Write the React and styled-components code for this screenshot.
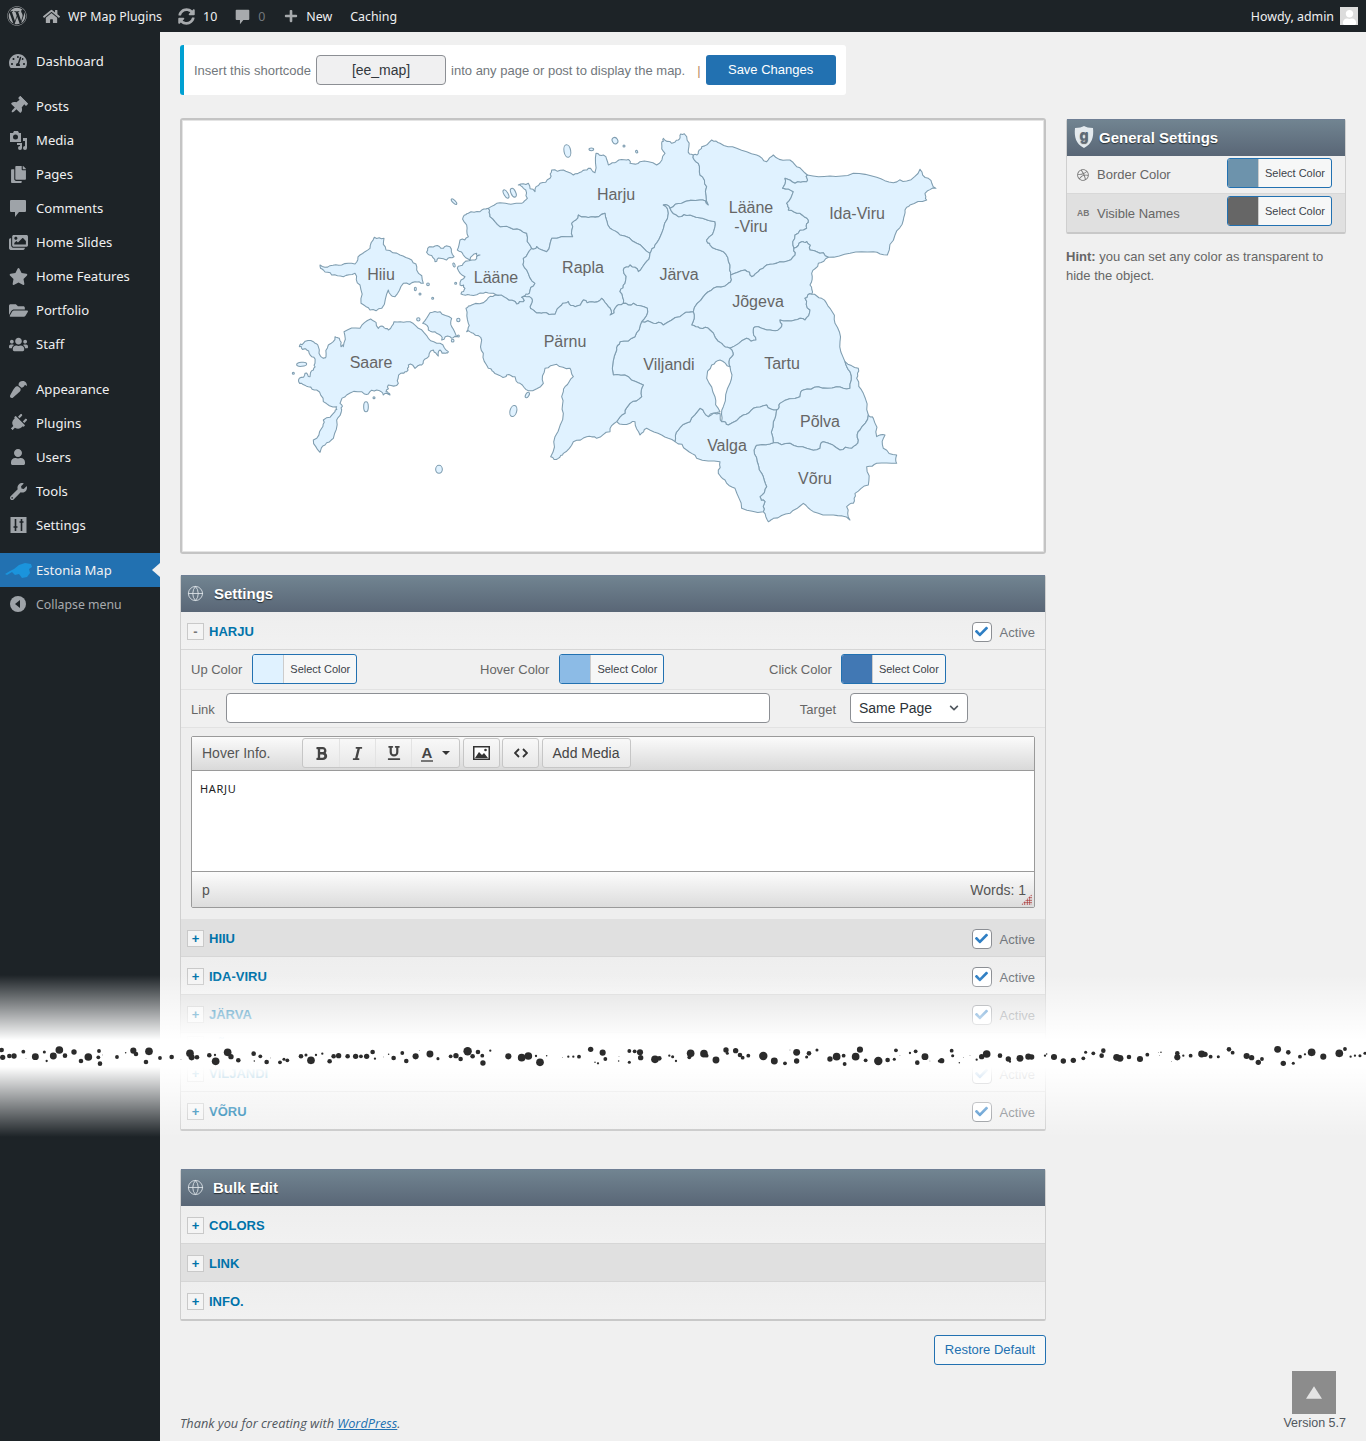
import React from "react";
import styled, { createGlobalStyle } from "styled-components";
import {
  FaWordpress, FaHome, FaSyncAlt, FaPlus, FaTachometerAlt, FaThumbtack, FaCopy,
  FaImages, FaStar, FaFolderOpen, FaUsers, FaPaintBrush, FaPlug, FaUser, FaWrench,
  FaBold, FaItalic, FaUnderline, FaCheck, FaChevronDown, FaDribbble,
} from "react-icons/fa";
import { Globe } from "lucide-react";

const GlobalStyle = createGlobalStyle`
  html, body { margin: 0; padding: 0; background: #f0f0f0; }
  body { font-family: "Liberation Sans", Arial, sans-serif; font-size: 13px; color: #666; }
  * { box-sizing: border-box; }
`;

const Page = styled.div`
  position: relative;
  width: 1366px;
  min-height: 1441px;
  display: flex;
  flex-direction: column;
  overflow: hidden;
`;

/* ---- admin bar ---- */
const TopBar = styled.header`
  height: 32px;
  display: flex;
  align-items: center;
  padding: 0 8px 0 7px;
  background: #1d2327;
  color: #f0f0f1;
  font-family: "Noto Sans", sans-serif;
  font-size: 12.4px;
  flex-shrink: 0;
`;
const BarItem = styled.span`
  display: flex;
  align-items: center;
  gap: ${(p) => p.$gap || 8}px;
  margin-left: ${(p) => p.$left || 0}px;
  color: ${(p) => (p.$dim ? "#72777c" : "#f0f0f1")};
  svg { color: #a7aaad; flex-shrink: 0; }
`;
const BarRight = styled.span`
  margin-left: auto;
  display: flex;
  align-items: center;
  gap: 6px;
`;
const Avatar = styled.span`
  width: 18px;
  height: 18px;
  background: #dcdcdc;
  display: flex;
  align-items: flex-end;
  justify-content: center;
  color: #fff;
  overflow: hidden;
`;

/* ---- admin menu ---- */
const Body = styled.div`
  flex: 1;
  display: flex;
`;
const Sidebar = styled.nav`
  width: 160px;
  flex-shrink: 0;
  background: #1d2327;
  padding-top: 12px;
  font-family: "Noto Sans", sans-serif;
  font-size: 13.1px;
`;
const MenuGroup = styled.div`
  margin-bottom: 11px;
`;
const MenuItem = styled.div`
  position: relative;
  height: 34px;
  display: flex;
  align-items: center;
  color: ${(p) => (p.$muted ? "#a7aaad" : "#f0f0f1")};
  font-size: ${(p) => (p.$muted ? "12.3px" : "inherit")};
  background: ${(p) => (p.$active ? "#2271b1" : "transparent")};
  &::after {
    content: ${(p) => (p.$active ? '""' : "none")};
    position: absolute;
    right: 0;
    top: 10px;
    border: 7px solid transparent;
    border-right: 8px solid #f0f0f0;
    border-left: 0;
  }
`;
const MenuIcon = styled.span`
  width: 36px;
  display: flex;
  justify-content: center;
  color: #9ea3a8;
  svg { transform: ${(p) => (p.$rotate ? `rotate(${p.$rotate}deg)` : "none")}; }
`;

/* ---- main ---- */
const Content = styled.main`
  flex: 1;
  display: flex;
  flex-direction: column;
  padding: 13px 20px 9px;
  min-width: 0;
`;
const Notice = styled.div`
  width: 666px;
  height: 50px;
  display: flex;
  align-items: center;
  padding-left: 10px;
  background: #fff;
  border-left: 4px solid #00a0d2;
  border-radius: 3px;
  margin-bottom: 23px;
  color: #72777c;
  gap: 5px;
`;
const ShortcodeBox = styled.div`
  width: 130px;
  height: 30px;
  display: flex;
  align-items: center;
  justify-content: center;
  background: #f0f0f1;
  border: 1px solid #8c8f94;
  border-radius: 4px;
  color: #32373c;
  font-size: 14px;
`;
const Pipe = styled.span`
  margin: 0 0 0 7px;
  color: #b98c62;
`;
const PrimaryButton = styled.button`
  width: 130px;
  height: 30px;
  padding: 0 0 2px;
  background: #2271b1;
  color: #fff;
  border: 0;
  border-radius: 3px;
  font-family: inherit;
  font-size: 13px;
`;
const Columns = styled.div`
  display: grid;
  grid-template-columns: 866px 280px;
  gap: 20px;
  align-items: start;
`;
const Column = styled.div`
  display: flex;
  flex-direction: column;
  padding-top: ${(p) => p.$top || 0}px;
`;
const MapBox = styled.div`
  height: 436px;
  padding: 0 0 0 98px;
  background: #fff;
  border: 2px solid #c4c4c4;
  border-radius: 3px;
  margin-bottom: 21px;
  box-shadow: inset 0 0 0 1px #e4e4e4;
`;
const MapSvg = styled.svg`
  display: block;
  width: 680px;
  height: 420px;
  overflow: visible;
`;
const Region = styled.polygon`
  fill: #e0f2ff;
  stroke: #7f9db0;
  stroke-width: 3.2;
  stroke-linejoin: round;
`;
const Islet = styled.ellipse`
  fill: #e0f2ff;
  stroke: #7f9db0;
  stroke-width: 3.2;
`;
const MapLabel = styled.text`
  font-family: "Liberation Sans", Arial, sans-serif;
  font-size: 48px;
  fill: #666;
  text-anchor: middle;
  dominant-baseline: central;
`;

/* ---- panels ---- */
const Panel = styled.section`
  border: 1px solid #cfcfcf;
  border-top: 0;
  border-bottom: 2px solid #c8c8c8;
  border-radius: 2px;
  margin-bottom: ${(p) => p.$bottom || 0}px;
`;
const PanelHead = styled.div`
  height: 37px;
  display: flex;
  align-items: center;
  gap: ${(p) => p.$gap || 10}px;
  padding: 0 0 2px ${(p) => p.$left || 6}px;
  background: linear-gradient(#718491, #596676);
  border-top: 1px solid #6f7f95;
  color: #fff;
  font-size: 15px;
  font-weight: bold;
  text-shadow: 0 1px 1px rgba(0, 0, 0, 0.6);
  svg { flex-shrink: 0; }
`;
const Row = styled.div`
  height: ${(p) => p.$height || 38}px;
  display: flex;
  align-items: center;
  padding: 2px 10px 0 6px;
  background: ${(p) => (p.$alt ? "#e0e0e0" : "linear-gradient(#eeeeee, #f1f1f1)")};
  border-bottom: 1px solid #d6d6d6;
  overflow: hidden;
  flex-shrink: 0;
  &:last-child { border-bottom: 0; }
`;
const Toggle = styled.span`
  width: 17px;
  height: 17px;
  display: flex;
  align-items: center;
  justify-content: center;
  border: 1px solid #c9c9c9;
  background: #f4f4f4;
  color: ${(p) => (p.$open ? "#777" : "#0073aa")};
  font-size: 13px;
  font-weight: bold;
  margin-right: 5px;
  flex-shrink: 0;
`;
const RowTitle = styled.span`
  color: #0073aa;
  font-size: 13px;
  font-weight: bold;
`;
const ActiveWrap = styled.label`
  margin-left: auto;
  display: flex;
  align-items: center;
  gap: 8px;
  color: #72777c;
`;
const ActiveText = styled.span`
  padding-top: 2px;
`;
const CheckBox = styled.span`
  width: 20px;
  height: 20px;
  display: flex;
  align-items: center;
  justify-content: center;
  background: #fff;
  border: 1px solid #8c8f94;
  border-radius: 4px;
  color: #2f7fc4;
`;
const ColorGrid = styled.div`
  height: 40px;
  display: grid;
  grid-template-columns: 289px 289px 1fr;
  align-items: start;
  padding-left: 10px;
  border-bottom: 1px solid #e2e2e2;
`;
const ColorCell = styled.div`
  display: flex;
  align-items: center;
  gap: ${(p) => p.$gap || 10}px;
  height: 30px;
  margin-top: 4px;
`;
const ColorButton = styled.div`
  width: 105px;
  height: 30px;
  display: flex;
  border: 1px solid #2271b1;
  border-radius: 3px;
  background: #f6f7f7;
  overflow: hidden;
  color: #3c434a;
  font-size: 11px;
  flex-shrink: 0;
`;
const Swatch = styled.span`
  width: 31px;
  background: ${(p) => p.$color};
  border-right: 1px solid #ccc;
`;
const SwatchText = styled.span`
  flex: 1;
  display: flex;
  align-items: center;
  justify-content: center;
`;
const LinkRow = styled.div`
  height: 38px;
  display: flex;
  align-items: center;
  padding: 0 0 2px 10px;
  border-bottom: 1px solid #e2e2e2;
`;
const FieldLabel = styled.span`
  padding-top: 3px;
`;
const TextInput = styled.div`
  width: 544px;
  height: 30px;
  margin-left: 11px;
  background: #fff;
  border: 1px solid #8c8f94;
  border-radius: 4px;
`;
const TargetLabel = styled(FieldLabel)`
  margin: 0 14px 0 30px;
`;
const SelectBox = styled.div`
  width: 118px;
  height: 30px;
  display: flex;
  align-items: center;
  justify-content: space-between;
  padding: 0 8px 0 8px;
  background: #fff;
  border: 1px solid #8c8f94;
  border-radius: 4px;
  color: #2c3338;
  font-size: 14px;
  svg { color: #50575e; }
`;
const EditorWrap = styled.div`
  padding: 8px 10px 11px;
  background: #eee;
`;
const Editor = styled.div`
  border: 1px solid #9a9a9a;
  border-radius: 2px;
  background: #fff;
`;
const EditorBar = styled.div`
  height: 34px;
  display: flex;
  align-items: flex-start;
  background: linear-gradient(#fbfbfb, #d9d9d9);
  border-bottom: 1px solid #9a9a9a;
  padding: 1px 0 0 10px;
  font-size: 14px;
  color: #555;
`;
const EditorLabel = styled.span`
  width: 100px;
  line-height: 30px;
`;
const ToolGroup = styled.div`
  height: 30px;
  display: flex;
  margin-right: 2.5px;
  border: 1px solid #c6c6c6;
  border-radius: 3px;
  background: linear-gradient(#f8f8f8, #e8e8e8);
  color: #333;
`;
const ToolButton = styled.span`
  width: ${(p) => p.$width || 36}px;
  display: flex;
  align-items: center;
  justify-content: center;
  gap: ${(p) => p.$gap || 0}px;
  font-size: 14px;
  color: #444;
  & + & { border-left: 1px solid #e3e3e3; }
`;
const ColorA = styled.span`
  font-weight: bold;
  font-size: 15px;
  line-height: 15px;
  border-bottom: 2px solid #777;
  padding: 0 1px;
`;
const Caret = styled.span`
  border: 4px solid transparent;
  border-top: 4px solid #333;
  border-bottom: 0;
`;
const EditorBody = styled.div`
  height: 100px;
  padding: 10px 8px;
  font-family: "Noto Sans", sans-serif;
  font-size: 11px;
  letter-spacing: 0.7px;
  color: #222;
`;
const EditorFoot = styled.div`
  position: relative;
  height: 36px;
  display: flex;
  align-items: center;
  justify-content: space-between;
  padding: 1px 8px 1px 10px;
  background: linear-gradient(#fcfcfc, #dcdcdc);
  border-top: 1px solid #9a9a9a;
  font-size: 14px;
  color: #555;
`;
const Grip = styled.span`
  position: absolute;
  right: 2px;
  bottom: 2px;
  width: 11px;
  height: 11px;
  background: radial-gradient(circle, #a33 0.8px, transparent 1px) 0 0 / 2.5px 2.5px;
  clip-path: polygon(100% 0, 100% 100%, 0 100%);
`;
const SideRow = styled.div`
  height: 38px;
  display: flex;
  align-items: center;
  padding-left: 10px;
  background: ${(p) => (p.$alt ? "#e0e0e0" : "#f0f0f0")};
  border-bottom: 1px solid #d8d8d8;
  &:last-child { border-bottom: 0; }
  font-size: 13px;
`;
const SideIcon = styled.span`
  width: 20px;
  display: flex;
  color: #777;
  font-size: 8.5px;
  font-weight: bold;
`;
const SideName = styled.span`
  flex: 1;
`;
const SideSwatch = styled(ColorButton)`
  margin-right: 13px;
  margin-bottom: 4px;
`;
const Hint = styled.p`
  margin: 13px 0 0;
  line-height: 19px;
  color: #666;
  font-size: 13px;
`;
const HintLead = styled.b`
  margin-right: 3.6px;
`;
const Actions = styled.div`
  display: flex;
  justify-content: flex-end;
  margin-top: 14px;
`;
const OutlineButton = styled.button`
  width: 112px;
  height: 30px;
  padding: 0 0 2px;
  background: #f6f7f7;
  border: 1px solid #2271b1;
  border-radius: 3px;
  color: #2271b1;
  font-family: inherit;
  font-size: 13px;
`;
const Footer = styled.footer`
  margin-top: auto;
  display: flex;
  justify-content: space-between;
  font-size: 12.5px;
  color: #50575e;
  i { font-family: "Open Sans", sans-serif; font-size: 12.75px; }
  a { color: #2271b1; }
  span { padding-top: 2px; }
`;
const ScrollTop = styled.div`
  position: absolute;
  top: 1371px;
  right: 30px;
  width: 44px;
  height: 43px;
  background: #8c8c8c;
  display: flex;
  align-items: center;
  justify-content: center;
`;
const Torn = styled.div`
  position: absolute;
  top: 975px;
  left: 0;
  right: 0;
  height: 162px;
  background: linear-gradient(
    rgba(255, 255, 255, 0) 0,
    #fff 65px,
    #fff 92px,
    rgba(255, 255, 255, 0) 162px
  );
  pointer-events: none;
`;
const TornDots = styled.svg`
  position: absolute;
  top: 60px;
  left: 0;
  fill: #2b2b2b;
`;

/* ---- icons drawn by hand ---- */
const CommentIcon = ({ size = 18 }) => (
  <svg width={size} height={size} viewBox="0 0 20 20" fill="currentColor">
    <path d="M3 2h14a1 1 0 0 1 1 1v10a1 1 0 0 1-1 1h-6l-4 5v-5H3a1 1 0 0 1-1-1V3a1 1 0 0 1 1-1z" />
  </svg>
);
const MediaIcon = () => (
  <svg width="19" height="19" viewBox="0 0 19 19" fill="currentColor">
    <path fillRule="evenodd" d="M1 2h3l1-2h4l1 2h2v9H1zM6.500 3.500a2.500 2.500 0 1 0 0 5 2.500 2.500 0 0 0 0-5z" />
    <path d="M14 7h4v10a2 2 0 1 1-2-2V10h-2zM8 12h5v5a2 2 0 1 1-2-2v-1H8z" />
  </svg>
);
const SlidersIcon = () => (
  <svg width="17" height="16" viewBox="0 0 16 16">
    <rect width="16" height="16" fill="#9ea3a8" />
    <path d="M5 2v12M11 2v12M3 10h4M9 5h4" stroke="#1d2327" strokeWidth="1.600" />
  </svg>
);
const EstoniaIcon = () => (
  <svg width="27" height="16" viewBox="0 0 27 16" fill="#1b94dc">
    <path d="M0 12l5-3 4-2 5-4 6-2 6 1 1 3-3 2 1 4-3 4-5 1-3-4-4 1-3-3-5 3z" />
  </svg>
);
const CollapseIcon = () => (
  <svg width="18" height="18" viewBox="0 0 18 18">
    <circle cx="9" cy="9" r="8" fill="#9ea3a8" />
    <path d="M11 5v8L6 9z" fill="#1d2327" />
  </svg>
);
const ShieldIcon = () => (
  <svg width="20" height="22" viewBox="0 0 20 22">
    <path d="M10 0c2 1.200 5 2 9 2 1 9-1 16-9 20C2 18 0 11 1 2c4 0 7-.8 9-2z" fill="#e4eaee" />
    <text x="10" y="14" textAnchor="middle" fontSize="15" fontWeight="bold" fill="#5d6a78" fontFamily="Liberation Sans, sans-serif">g</text>
  </svg>
);
const ImageIcon = () => (
  <svg width="17" height="14" viewBox="0 0 17 14">
    <rect x=".75" y=".75" width="15.500" height="12.500" fill="#fff" stroke="#333" strokeWidth="1.500" />
    <path d="M2 12l4-6 3 3 2-2 4 5z" fill="#333" />
    <circle cx="12.500" cy="4" r="1.300" fill="#333" />
  </svg>
);
const CodeIcon = () => (
  <svg width="14" height="10" viewBox="0 0 14 10" fill="none" stroke="#333" strokeWidth="1.800">
    <path d="M5 1L1 5l4 4M9 1l4 4-4 4" />
  </svg>
);

/* ---- map data, in 3x units from the map's corner ---- */
const pairs = (dx, nums) => {
  const out = [];
  for (let i = 0; i < nums.length; i += 2) out.push([nums[i] + dx, nums[i + 1]]);
  return out;
};
const w = (...nums) => pairs(0, nums);
const e = (...nums) => pairs(990, nums);

const regions = [
  w(120,435,150,437,185,435,225,432,240,405,270,385,283,352,312,355,318,390,360,405,395,420,410,450,430,490,405,485,370,490,345,530,325,510,305,565,270,570,243,550,240,495,225,460,190,470,155,465,130,450),
  w(58,680,70,670,100,665,115,680,130,715,138,710,145,675,165,650,178,655,183,680,190,680,192,635,240,625,272,597,295,625,310,620,325,630,342,605,380,605,415,625,445,655,480,670,505,695,497,700,480,690,475,708,460,690,440,715,425,735,405,745,385,735,380,755,362,760,355,790,325,795,318,815,330,825,310,825,290,810,265,822,245,815,200,825,180,850,185,870,170,900,160,955,135,975,120,997,100,960,125,925,130,900,165,875,170,860,130,845,110,810,85,800,65,790,58,775,75,760,90,770,100,750,105,730,95,710,80,690,65,685),
  w(428,610,450,578,480,575,515,595,515,620,530,650,510,650,485,660,470,640,445,630),
  w(443,385,465,378,490,385,510,380,522,410,500,420,480,415,465,425,448,405),
  w(550,290,565,280,600,275,625,265,630,290,660,320,700,328,740,340,755,385,730,415,740,450,765,490,748,520,725,532,730,545,710,552,680,535,640,520,610,520,570,525,543,522,555,505,540,495,555,470,532,445,550,430,585,420,600,405,590,400,570,420,550,405,532,390,540,360,565,350,560,315),
  [...w(625,265,660,248,725,250,742,235,730,205,715,195,745,190,765,215,780,190,810,175,815,150,850,150,880,165,905,155,925,145,945,158,948,100,970,105,985,135),
    ...e(20,125,50,120,60,130,90,125,140,135,165,100,155,70,160,55,185,70,205,60,212,42,230,50,235,90,250,105,265,130,270,165,290,200,295,255,270,240,215,250,180,265,160,255,175,280,155,340,135,375,120,400,80,370,30,345,0,325),
    ...w(975,280,935,290,895,285,875,310,878,350,815,355,800,395,770,380,755,385,740,340,700,328,660,320,630,290)],
  [...w(755,385,770,380,800,395,815,355,878,350,875,310,895,285,935,290,975,280),
    ...e(0,325,30,345,80,370,120,400,105,430,85,455,60,435,40,450,45,490,30,515,40,550,15,565,0,585),
    ...w(985,560,965,535,935,545,910,540,885,560,865,545,845,555,825,583,790,578,765,575,750,560,755,535,730,530,748,520,765,490,740,450,730,415)],
  e(120,400,135,375,155,340,175,280,160,255,180,265,205,290,240,285,315,305,315,320,290,360,300,375,340,395,360,435,362,465,355,490,310,505,280,530,250,575,210,590,160,615,130,610,95,605,112,565,70,550,40,550,30,515,45,490,40,450,60,435,85,455,105,430),
  e(250,105,265,95,275,80,305,60,330,70,380,85,440,105,470,125,490,105,530,120,560,140,592,165,590,185,555,190,525,175,518,205,550,215,530,250,535,270,570,280,595,300,590,325,555,345,552,385,550,410,510,425,470,435,445,455,425,470,405,450,362,465,360,435,340,395,300,375,290,360,315,320,315,305,240,285,205,290,180,265,215,250,270,240,295,255,290,200,270,165,265,130),
  e(592,165,660,168,730,160,800,172,850,188,890,183,930,148,955,175,978,205,945,220,950,240,900,255,885,270,880,300,855,345,832,405,790,395,720,400,655,412,620,395,600,390,590,365,575,365,552,385,555,345,590,325,595,300,570,280,535,270,530,250,550,215,518,205,525,175,555,190,590,185),
  e(362,465,405,450,425,470,445,455,470,435,510,425,550,410,552,385,575,365,590,365,600,390,620,395,655,412,625,430,605,460,600,495,605,523,585,535,600,570,585,600,555,600,510,600,510,625,480,630,445,620,430,630,438,660,410,655,360,685,335,670,300,630,270,625,245,615,250,575,280,530,310,505,355,490),
  e(360,685,410,655,438,660,430,630,445,620,480,630,510,625,510,600,555,600,585,600,600,570,585,535,605,523,635,535,660,565,675,610,690,665,705,725,720,755,720,805,680,800,625,800,580,810,570,830,510,850,500,870,470,855,430,865,400,885,355,915,335,905,340,860,360,790,360,740,365,710),
  e(500,870,510,850,570,830,580,810,625,800,680,800,720,805,720,755,705,725,745,745,740,775,760,820,775,885,750,930,745,960,725,985,690,990,640,965,630,985,590,985,540,970,490,968,490,905),
  e(490,968,540,970,590,985,630,985,640,965,690,990,725,985,745,960,750,930,775,885,790,895,800,950,825,945,820,985,860,1005,860,1030,800,1030,770,1040,775,1095,735,1120,730,1150,710,1160,720,1200,670,1185,610,1175,580,1150,540,1180,490,1195,475,1205,460,1175,465,1145,450,1130,470,1100,455,1060,445,1035,432,990,445,975),
  e(330,880,335,905,355,915,400,885,430,865,470,855,500,870,490,905,490,968,445,975,432,990,445,1035,455,1060,470,1100,450,1130,465,1145,460,1175,395,1165,375,1105,345,1080,325,1060,330,1025,260,1015,230,990,195,965,205,930,240,905,270,865,295,890),
  e(95,605,130,610,160,615,210,590,250,575,245,615,270,625,300,630,335,670,360,685,365,710,360,740,330,720,305,735,290,775,315,830,330,875,295,890,270,865,240,905,205,930,195,965,155,945,110,925,90,945,75,905,60,910,20,905,45,880,60,850,95,830,100,795,55,770,10,765,20,690,30,665,75,650),
  [...w(558,565,575,555,620,540,645,525,680,535,710,552,730,545,725,532,755,535,750,560,765,575,790,578,825,583,845,555,865,545,885,560,910,540,935,545,965,535,985,560),
    ...e(0,585,15,565,40,550,70,550,112,565,95,605,75,650,30,665,20,690,10,765,55,770,100,795,95,830,60,850,45,880,20,905,0,935),
    ...w(950,955,920,950,880,965,850,1000,835,1015,812,1010,825,950,850,880,845,830,855,800,880,770,870,745,830,733,795,745,790,790,745,812,720,790,705,770,680,765,665,770,640,755,625,745,610,700,605,660,580,640,560,635,565,610)],
];

// [cx, cy, rx, ry, rotate]
const islets = [
  [65,733,15,6,-5],[40,760,3,3,0],[415,598,5,5,0],[535,600,5,5,0],[535,648,3,3,0],[518,662,4,4,0],
  [258,860,7,15,0],[282,833,3,3,0],[477,1048,10,12,0],[444,493,4,4,0],[406,507,3,5,0],[420,522,3,3,0],
  [458,535,3,3,0],[527,490,3,3,0],[522,435,3,6,-20],[522,245,4,11,-45],[742,825,5,9,30],[700,873,10,17,15],
  [862,93,10,19,-10],[934,88,7,4,0],[1005,62,8,10,-30],[678,222,6,14,-30],[700,218,7,14,-25],
  [1032,78,3,3,0],[1070,95,3,4,-30],
];

// small kinks on each border; the same for both regions that share it
const wiggle = (pts, amount) => {
  const out = [];
  pts.forEach((a, i) => {
    const b = pts[(i + 1) % pts.length];
    const [p, q] = a[0] < b[0] || (a[0] === b[0] && a[1] < b[1]) ? [a, b] : [b, a];
    const len = Math.hypot(q[0] - p[0], q[1] - p[1]) || 1;
    const hash = Math.round(p[0] * 7 + p[1] * 13 + q[0] * 17 + q[1] * 23);
    const kick = ((hash % 13) - 6) * amount;
    out.push(a, [
      (p[0] + q[0]) / 2 + (-(q[1] - p[1]) / len) * kick,
      (p[1] + q[1]) / 2 + ((q[0] - p[0]) / len) * kick,
    ]);
  });
  return out;
};
const outline = (pts) => wiggle(wiggle(pts, 1), 0.5).map((pt) => pt.join(",")).join(" ");

const labels = [
  ["Harju", 1008, 222], ["Lääne", 648, 471], ["Rapla", 909, 441], ["Järva", 1197, 462], ["Hiiu", 303, 462],
  ["Saare", 273, 726], ["Pärnu", 855, 663], ["Viljandi", 1167, 732], ["Tartu", 1506, 729], ["Jõgeva", 1434, 543],
  ["Lääne", 1413, 261], ["-Viru", 1413, 318], ["Ida-Viru", 1731, 279], ["Põlva", 1620, 903], ["Valga", 1341, 975],
  ["Võru", 1605, 1074],
];

/* ---- torn strip dots [x, y, r] in 3x units, per strip piece ---- */
const dotPieces = [
  { x: 0, y: 960, dots: [5,270,6,8,292,7,28,288,6,42,288,7,70,275,5,78,295,1,106,290,9,133,276,4,140,303,3,160,288,9,178,270,10,195,287,6,222,276,7,243,303,6,265,291,10,297,273,5,295,292,5,308,285,1,300,311,6,351,291,5,377,278,2,400,272,8,408,282,6,447,274,10,438,306,6,480,294,5,515,291,6,543,298,1,570,280,10,575,292,8,591,292,6,628,286,6,647,304,10,645,285,3,683,277,10,693,290,7,715,301,6,761,281,6,763,303,2,781,289,5,800,306,6,812,294,1,840,307,5,852,298,4,862,301,5,903,289,6,918,285,4,933,301,10,948,285,3,967,281,3,989,304,6,1001,289,6,1016,287,7,1043,289,6,1067,289,7,1083,289,5,1100,289,7,1118,276,6,1125,296,3,1151,291,1,1166,283,2,1181,294,6,1207,279,5,1219,303,6,1247,289,8,1258,272,1,1290,282,9,1314,296,4,1352,289,5,1368,287,7,1382,297,6,1403,274,11,1434,276,6,1418,289,6,1447,287,5,1471,272,3,1449,309,7] },
  { x: 500, y: 1035, dots: [25,64,8,65,68,10,85,63,10,108,63,3,120,82,10,140,62,2,187,68,1,205,65,3,220,65,3,237,65,5,272,43,7,308,53,8,316,72,5,285,82,2,294,85,3,357,65,1,356,78,2,388,48,5,404,49,5,420,52,8,422,68,7,388,82,4,465,73,10,478,70,6,508,62,3,518,65,4,528,78,3,572,55,10,568,67,5,612,56,10,620,62,5,648,75,9,678,45,7,682,55,4,707,47,7,720,60,6,728,68,5,745,62,5,790,63,11,823,78,9,855,85,5,870,45,1,890,52,9,890,78,7,927,55,6,920,66,4,951,45,4,990,72,7,1010,65,10,1031,62,5,1034,87,5,1067,65,10,1080,44,8,1097,76,5,1135,78,11,1163,75,6,1183,73,4,1188,46,5,1200,62,1,1230,54,3,1247,49,5,1252,83,6,1275,65,9,1290,78,1,1318,78,4] },
  { x: 930, y: 1035, dots: [35,77,7,65,47,5,68,62,4,88,83,2,100,67,1,120,62,1,140,74,3,155,65,7,170,57,10,210,62,6,235,72,7,240,80,3,270,70,9,295,65,8,305,66,7,350,57,2,345,62,3,372,66,8,400,78,7,430,76,7,460,70,5,467,52,4,490,55,5,515,62,6,520,47,6,560,67,9,570,70,9,597,66,6,630,72,8,652,59,5,685,52,1,693,52,2,688,62,1,725,80,1,742,55,6,742,67,8,760,62,3,782,62,5,815,57,9,825,58,7,842,65,5,865,65,4,897,43,6,908,53,5,950,63,8,965,68,7,985,82,7,996,72,5,1043,43,9,1075,52,6,1060,85,7,1090,85,4,1110,65,5,1125,58,3,1145,52,10,1180,65,8,1228,55,10,1245,42,5,1262,65,3,1275,62,3,1290,62,4,1305,55,4] },
];

const menu = [
  [{ Icon: FaTachometerAlt, label: "Dashboard", size: 18 }],
  [
    { Icon: FaThumbtack, label: "Posts", size: 18, rotate: 45 },
    { Icon: MediaIcon, label: "Media" },
    { Icon: FaCopy, label: "Pages", size: 17 },
    { Icon: CommentIcon, label: "Comments", size: 20 },
    { Icon: FaImages, label: "Home Slides", size: 19 },
    { Icon: FaStar, label: "Home Features", size: 19 },
    { Icon: FaFolderOpen, label: "Portfolio", size: 19 },
    { Icon: FaUsers, label: "Staff", size: 19 },
  ],
  [
    { Icon: FaPaintBrush, label: "Appearance", size: 17, rotate: 180 },
    { Icon: FaPlug, label: "Plugins", size: 18, rotate: 45 },
    { Icon: FaUser, label: "Users", size: 16 },
    { Icon: FaWrench, label: "Tools", size: 17 },
    { Icon: SlidersIcon, label: "Settings" },
  ],
];

const Active = () => (
  <ActiveWrap>
    <CheckBox><FaCheck size={13} /></CheckBox>
    <ActiveText>Active</ActiveText>
  </ActiveWrap>
);

const ColorPicker = ({ color, as }) => {
  const Wrap = as || ColorButton;
  return (
    <Wrap>
      <Swatch $color={color} />
      <SwatchText>Select Color</SwatchText>
    </Wrap>
  );
};

const AreaRow = ({ name, alt, height, active = true, open }) => (
  <Row $alt={alt} $height={height}>
    <Toggle $open={open}>{open ? "-" : "+"}</Toggle>
    <RowTitle>{name}</RowTitle>
    {active && <Active />}
  </Row>
);

export default function App() {
  return (
    <>
      <GlobalStyle />
      <Page>
        <TopBar>
          <BarItem><FaWordpress size={20} /></BarItem>
          <BarItem $left={16}><FaHome size={17} />WP Map Plugins</BarItem>
          <BarItem $left={16}><FaSyncAlt size={17} />10</BarItem>
          <BarItem $left={17}><CommentIcon size={17} /></BarItem>
          <BarItem $left={7} $dim>0</BarItem>
          <BarItem $left={19}><FaPlus size={14} />New</BarItem>
          <BarItem $left={18}>Caching</BarItem>
          <BarRight>
            Howdy, admin
            <Avatar><FaUser size={15} /></Avatar>
          </BarRight>
        </TopBar>
        <Body>
          <Sidebar>
            {menu.map((group, i) => (
              <MenuGroup key={i}>
                {group.map(({ Icon, label, size, rotate }) => (
                  <MenuItem key={label}>
                    <MenuIcon $rotate={rotate}><Icon size={size} /></MenuIcon>
                    {label}
                  </MenuItem>
                ))}
              </MenuGroup>
            ))}
            <MenuItem $active>
              <MenuIcon><EstoniaIcon /></MenuIcon>
              Estonia Map
            </MenuItem>
            <MenuItem $muted>
              <MenuIcon><CollapseIcon /></MenuIcon>
              Collapse menu
            </MenuItem>
          </Sidebar>
          <Content>
            <Notice>
              Insert this shortcode
              <ShortcodeBox>[ee_map]</ShortcodeBox>
              into any page or post to display the map.
              <Pipe>|</Pipe>
              <PrimaryButton>Save Changes</PrimaryButton>
            </Notice>
            <Columns>
              <Column>
                <MapBox>
                  <MapSvg viewBox="0 0 2040 1260">
                    {regions.map((pts, i) => <Region key={i} points={outline(pts)} />)}
                    {islets.map(([cx, cy, rx, ry, rot], i) => (
                      <Islet key={i} cx={cx} cy={cy} rx={rx} ry={ry} transform={`rotate(${rot} ${cx} ${cy})`} />
                    ))}
                    {labels.map(([name, x, y], i) => <MapLabel key={i} x={x} y={y}>{name}</MapLabel>)}
                  </MapSvg>
                </MapBox>
                <Panel $bottom={38}>
                  <PanelHead><Globe size={17} strokeWidth={1.2} color="#dfe5ea" />Settings</PanelHead>
                  <AreaRow name="HARJU" open />
                  <ColorGrid>
                    <ColorCell>Up Color<ColorPicker color="#e0f2ff" /></ColorCell>
                    <ColorCell>Hover Color<ColorPicker color="#8cbbe6" /></ColorCell>
                    <ColorCell $gap={9}>Click Color<ColorPicker color="#4178b4" /></ColorCell>
                  </ColorGrid>
                  <LinkRow>
                    <FieldLabel>Link</FieldLabel>
                    <TextInput />
                    <TargetLabel>Target</TargetLabel>
                    <SelectBox>Same Page<FaChevronDown size={10} /></SelectBox>
                  </LinkRow>
                  <EditorWrap>
                    <Editor>
                      <EditorBar>
                        <EditorLabel>Hover Info.</EditorLabel>
                        <ToolGroup>
                          <ToolButton><FaBold size={15} /></ToolButton>
                          <ToolButton><FaItalic size={15} /></ToolButton>
                          <ToolButton><FaUnderline size={14} /></ToolButton>
                          <ToolButton $width={48} $gap={9}><ColorA>A</ColorA><Caret /></ToolButton>
                        </ToolGroup>
                        <ToolGroup><ToolButton $width={35}><ImageIcon /></ToolButton></ToolGroup>
                        <ToolGroup><ToolButton $width={35}><CodeIcon /></ToolButton></ToolGroup>
                        <ToolGroup><ToolButton $width={87}>Add Media</ToolButton></ToolGroup>
                      </EditorBar>
                      <EditorBody>HARJU</EditorBody>
                      <EditorFoot>
                        <span>p</span>
                        <span>Words: 1</span>
                        <Grip />
                      </EditorFoot>
                    </Editor>
                  </EditorWrap>
                  <AreaRow name="HIIU" alt />
                  <AreaRow name="IDA-VIRU" />
                  <AreaRow name="JÄRVA" alt />
                  <AreaRow name="JÕGEVA" height={21} active={false} />
                  <AreaRow name="VILJANDI" />
                  <AreaRow name="VÕRU" height={37} />
                </Panel>
                <Panel>
                  <PanelHead $gap={9}><Globe size={17} strokeWidth={1.2} color="#dfe5ea" />Bulk Edit</PanelHead>
                  <AreaRow name="COLORS" active={false} />
                  <AreaRow name="LINK" alt active={false} />
                  <AreaRow name="INFO." height={37} active={false} />
                </Panel>
                <Actions><OutlineButton>Restore Default</OutlineButton></Actions>
              </Column>
              <Column $top={1}>
                <Panel>
                  <PanelHead $gap={5} $left={7}><ShieldIcon />General Settings</PanelHead>
                  <SideRow>
                    <SideIcon><FaDribbble size={12} /></SideIcon>
                    <SideName>Border Color</SideName>
                    <ColorPicker color="#6d93ac" as={SideSwatch} />
                  </SideRow>
                  <SideRow $alt>
                    <SideIcon>AB</SideIcon>
                    <SideName>Visible Names</SideName>
                    <ColorPicker color="#666666" as={SideSwatch} />
                  </SideRow>
                </Panel>
                <Hint><HintLead>Hint:</HintLead>you can set any color as transparent to hide the object.</Hint>
              </Column>
            </Columns>
            <Footer>
              <i>Thank you for creating with <a href="#wp">WordPress</a>.</i>
              <span>Version 5.7</span>
            </Footer>
          </Content>
        </Body>
        <ScrollTop>
          <svg width="16" height="13" viewBox="0 0 18 14" fill="#e4e4e4"><path d="M9 0l9 14H0z" /></svg>
        </ScrollTop>
        <Torn>
          <TornDots width="1366" height="40" viewBox="0 1035 1366 40">
            {dotPieces.map((piece) => (
              <g key={piece.x} transform={`translate(${piece.x} ${piece.y}) scale(0.3333)`}>
                {piece.dots.map((v, i) =>
                  i % 3 === 0 ? <circle key={i} cx={v} cy={piece.dots[i + 1]} r={piece.dots[i + 2] * 1.15} /> : null
                )}
              </g>
            ))}
          </TornDots>
        </Torn>
      </Page>
    </>
  );
}
